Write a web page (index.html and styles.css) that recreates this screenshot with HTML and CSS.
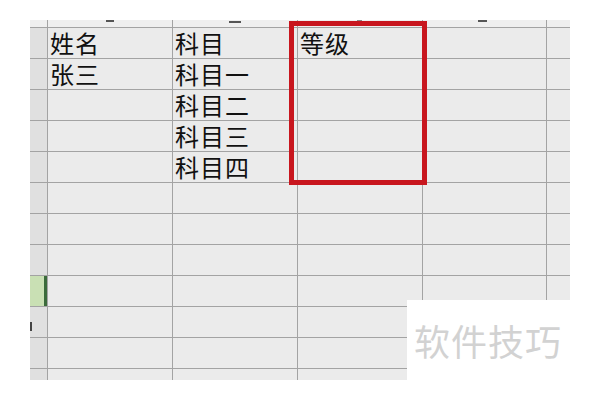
FILE: index.html
```html
<!DOCTYPE html>
<html>
<head>
  <meta charset="utf-8">
  <link rel="stylesheet" href="styles.css">
</head>
<body>
  <div class="sheet">
    <div class="grid">
      <div class="corner"></div>
      <div class="colhead"><span class="mark m1"></span></div>
      <div class="colhead"><span class="mark m2"></span></div>
      <div class="colhead"><span class="mark m4"></span></div>
      <div class="colhead"><span class="mark m3"></span></div>
      <div class="colhead"></div>

      <div class="rowhead"></div><div class="cell">姓名</div><div class="cell">科目</div><div class="cell">等级</div><div class="cell"></div><div class="cell"></div>
      <div class="rowhead"></div><div class="cell">张三</div><div class="cell">科目一</div><div class="cell"></div><div class="cell"></div><div class="cell"></div>
      <div class="rowhead"></div><div class="cell"></div><div class="cell">科目二</div><div class="cell"></div><div class="cell"></div><div class="cell"></div>
      <div class="rowhead"></div><div class="cell"></div><div class="cell">科目三</div><div class="cell"></div><div class="cell"></div><div class="cell"></div>
      <div class="rowhead"></div><div class="cell"></div><div class="cell">科目四</div><div class="cell"></div><div class="cell"></div><div class="cell"></div>
      <div class="rowhead"></div><div class="cell"></div><div class="cell"></div><div class="cell"></div><div class="cell"></div><div class="cell"></div>
      <div class="rowhead"></div><div class="cell"></div><div class="cell"></div><div class="cell"></div><div class="cell"></div><div class="cell"></div>
      <div class="rowhead"></div><div class="cell"></div><div class="cell"></div><div class="cell"></div><div class="cell"></div><div class="cell"></div>
      <div class="rowhead active"></div><div class="cell"></div><div class="cell"></div><div class="cell"></div><div class="cell"></div><div class="cell"></div>
      <div class="rowhead"><span class="tick"></span></div><div class="cell"></div><div class="cell"></div><div class="cell"></div><div class="cell"></div><div class="cell"></div>
      <div class="rowhead"></div><div class="cell"></div><div class="cell"></div><div class="cell"></div><div class="cell"></div><div class="cell"></div>
      <div class="rowhead"></div><div class="cell"></div><div class="cell"></div><div class="cell"></div><div class="cell"></div><div class="cell"></div>
    </div>
    <div class="highlight"></div>
  </div>

  <div class="watermark">软件技巧</div>
</body>
</html>
```

FILE: styles.css
```css
body{
  margin:0;
  background-color:#ffffff;
  font-family:"Noto Sans CJK SC","Noto Sans",sans-serif;
}
.sheet{
  position:relative;
  width:540px;
  height:360px;
  margin-left:30px;
  margin-top:20px;
  overflow:hidden;
  background-color:#a3a3a3;
}
.grid{
  display:grid;
  grid-template-columns:17px 124px 124px 124px 123px 24px;
  grid-template-rows:7px;
  grid-auto-rows:30px;
  gap:1px;
}
.corner,
.colhead{
  position:relative;
  background-color:#efefef;
}
.mark{
  position:absolute;
  top:0;
  height:2px;
  background-color:#555555;
}
.m1{ left:58px; width:8px; }
.m2{ left:56px; width:12px; top:1px; }
.m3{ left:55px; width:9px; }
.m4{ left:59px; width:5px; background-color:#888888; }
.rowhead{
  position:relative;
  background-color:#e0e0e0;
}
.rowhead.active{
  background-color:#c9e0b4;
  border-right:3px solid #3b6b3b;
}
.tick{
  position:absolute;
  left:0;
  top:15px;
  width:2px;
  height:9px;
  background-color:#444444;
}
.cell{
  background-color:#ebebeb;
  color:#111111;
  font-size:24px;
  line-height:30px;
  padding-left:2px;
  letter-spacing:1px;
  white-space:nowrap;
}
.highlight{
  position:absolute;
  left:259px;
  top:1px;
  width:128px;
  height:154px;
  border:5px solid #c8161e;
}
.watermark{
  position:absolute;
  left:407px;
  top:300px;
  width:193px;
  height:80px;
  background-color:#ffffff;
  color:#d2d2d2;
  font-size:36px;
  line-height:80px;
  padding-left:7px;
  letter-spacing:1px;
  box-sizing:border-box;
}
```
